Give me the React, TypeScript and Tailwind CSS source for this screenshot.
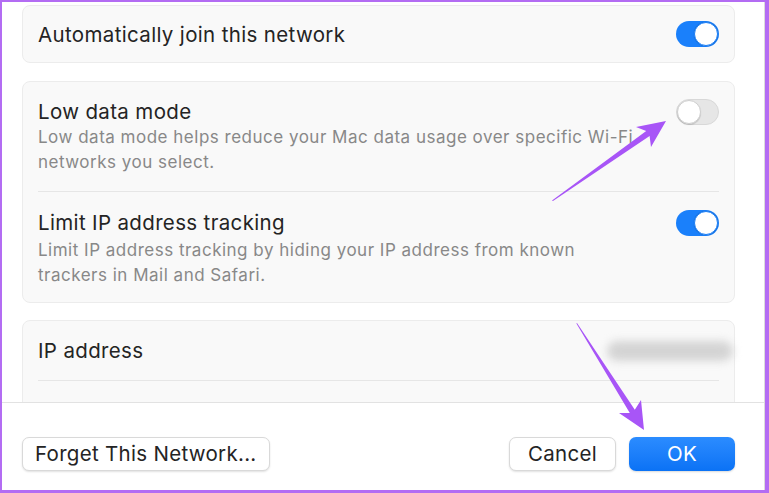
import React from "react";

const font = { fontFamily: "Inter, 'Noto Sans', sans-serif" };

function Toggle({ on }: { on: boolean }) {
  return on ? (
    <div className="relative h-[26px] w-[43px] shrink-0 rounded-full bg-[#1a80fb]">
      <div className="absolute right-[1px] top-[1px] h-[24px] w-[24px] rounded-full border border-[#1a80fb] bg-white shadow-[0_0_1px_rgba(0,0,0,0.3)]" />
    </div>
  ) : (
    <div className="relative h-[26px] w-[43px] shrink-0 rounded-full border border-[#d8d8d8] bg-[#e6e6e6]">
      <div className="absolute left-[0px] top-[0px] h-[24px] w-[24px] rounded-full border border-[#cfcfcf] bg-white shadow-[0_1px_1px_rgba(0,0,0,0.15)]" />
    </div>
  );
}

export default function App() {
  return (
    <div
      className="relative h-[493px] w-[769px] overflow-hidden border-b-[3px] border-l-2 border-r-4 border-t-2 border-[#b36cf3] bg-white text-[#242424]"
      style={font}
    >
      <div className="flex h-full flex-col border-r border-[#dcdcdc]">
        <div className="h-[400px] overflow-hidden pl-[20px] pr-[29px] pt-[3px]">
          {/* Card 1 */}
          <div className="flex h-[58px] items-center justify-between rounded-[8px] border border-[#ececec] bg-[#f9f9f9] pl-[15px] pr-[15px]">
            <span className="pt-[2px] text-[20.5px] leading-[26px] tracking-[0.35px]">Automatically join this network</span>
            <Toggle on />
          </div>

          {/* Card 2 */}
          <div className="mt-[18px] rounded-[8px] border border-[#ececec] bg-[#f9f9f9] px-[15px]">
            <div className="flex items-start justify-between pb-[16px] pt-[17px]">
              <div>
                <div className="text-[20.5px] leading-[26px] tracking-[0.35px]">Low data mode</div>
                <div className="text-[17px] leading-[25px] tracking-[0.5px] text-[#888888]">
                  Low data mode helps reduce your Mac data usage over specific Wi-Fi
                  <br />
                  networks you select.
                </div>
              </div>
              <Toggle on={false} />
            </div>
            <div className="h-px bg-[#e6e6e6]" />
            <div className="flex items-start justify-between pb-[14px] pt-[18px]">
              <div>
                <div className="text-[20.5px] leading-[26px] tracking-[0.35px]">Limit IP address tracking</div>
                <div className="mt-[2px] text-[17px] leading-[25px] tracking-[0.5px] text-[#888888]">
                  Limit IP address tracking by hiding your IP address from known
                  <br />
                  trackers in Mail and Safari.
                </div>
              </div>
              <Toggle on />
            </div>
          </div>

          {/* Card 3 */}
          <div className="mt-[17px] rounded-[8px] border border-[#ececec] bg-[#f9f9f9] px-[15px]">
            <div className="flex h-[59px] items-center justify-between">
              <span className="text-[20.5px] leading-[26px] tracking-[0.35px]">IP address</span>
              <div className="-mr-[14px] h-[20px] w-[126px] rounded-full bg-[#d4d4d4] blur-[4px]" />
            </div>
            <div className="h-px bg-[#e6e6e6]" />
            <div className="h-[40px]" />
          </div>
        </div>

        {/* Footer */}
        <div className="flex flex-1 items-start justify-between border-t border-[#e2e2e2] bg-white pl-[20px] pr-[29px] pt-[34px]">
          <button className="h-[34px] rounded-[7px] border border-[#d9d9d9] bg-white px-[12px] text-[20.5px] leading-none tracking-[0.3px] text-[#242424] shadow-[0_1px_2px_rgba(0,0,0,0.12)]">
            Forget This Network...
          </button>
          <div className="flex gap-[13px]">
            <button className="h-[34px] w-[107px] rounded-[7px] border border-[#d9d9d9] bg-white text-[20.5px] leading-none tracking-[0.3px] text-[#242424] shadow-[0_1px_2px_rgba(0,0,0,0.12)]">
              Cancel
            </button>
            <button className="h-[34px] w-[106px] rounded-[7px] bg-gradient-to-b from-[#2b8cff] to-[#0a72f5] text-[20.5px] leading-none tracking-[0.3px] text-white shadow-[0_1px_2px_rgba(0,0,0,0.15)]">
              OK
            </button>
          </div>
        </div>
      </div>

      {/* Annotation arrows */}
      <svg
        className="pointer-events-none absolute left-[-2px] top-[-2px]"
        width="769"
        height="493"
        viewBox="0 0 769 493"
      >
        <polygon
          fill="#a855f7"
          points="552,200.5 646.2,131 636,127 666,121 651,147 649.6,136 553,201"
          strokeLinejoin="round"
        />
        <polygon
          fill="#a855f7"
          points="577,323 634.8,409.8 641,400 644,430 619,413 629.8,413 576.4,323.5"
          strokeLinejoin="round"
        />
      </svg>
    </div>
  );
}
